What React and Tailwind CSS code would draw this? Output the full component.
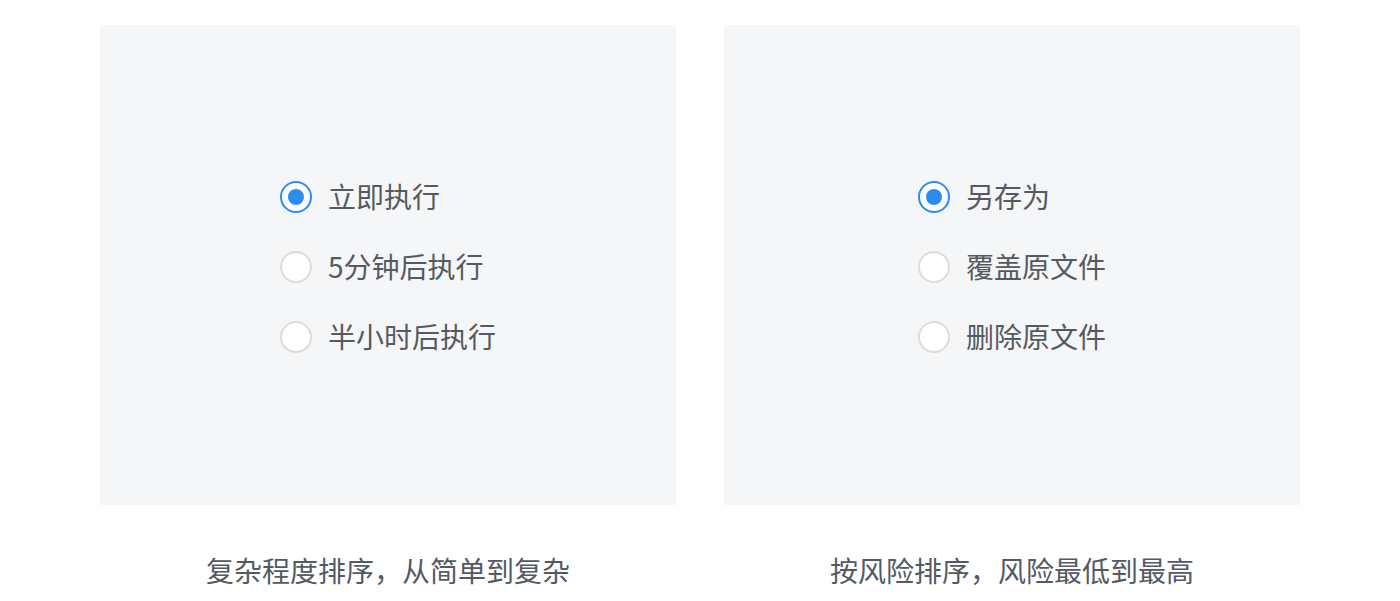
import { useState } from 'react';

function Radio({ checked, label, onClick }) {
    return (
        <button onClick={onClick} className="flex h-[32px] items-center gap-4 text-left">
            <span
                className={
                    checked
                        ? "flex h-8 w-8 shrink-0 items-center justify-center rounded-full border-2 border-[#2d8cf0] bg-white"
                        : "flex h-8 w-8 shrink-0 items-center justify-center rounded-full border-2 border-[#dcdcdc] bg-white"
                }
            >
                {checked && <span className="h-4 w-4 rounded-full bg-[#2d8cf0]" />}
            </span>
            <span className="-mt-[2px] text-[28px] leading-none text-[#555a60]">{label}</span>
        </button>
    );
}

function Panel({ options, caption }) {
    const [value, setValue] = useState(0);
    return (
        <div className="flex w-[576px] flex-col items-center">
            <div className="flex h-[480px] w-full items-center justify-center bg-[#f5f6f8]">
                <div className="mt-[4px] flex flex-col gap-[38px]">
                    {options.map((opt, i) => (
                        <Radio key={opt} label={opt} checked={value === i} onClick={() => setValue(i)} />
                    ))}
                </div>
            </div>
            <p className="mt-[51px] text-[28px] leading-none text-[#535a63]">{caption}</p>
        </div>
    );
}

export default function App() {
    return (
        <div
            className="flex h-[601px] w-[1400px] justify-center gap-12 bg-white pt-[25px]"
            style={{ fontFamily: '"Noto Sans CJK SC", "Noto Sans", sans-serif' }}
        >
            <Panel options={["立即执行", "5分钟后执行", "半小时后执行"]} caption="复杂程度排序，从简单到复杂" />
            <Panel options={["另存为", "覆盖原文件", "删除原文件"]} caption="按风险排序，风险最低到最高" />
        </div>
    );
}
